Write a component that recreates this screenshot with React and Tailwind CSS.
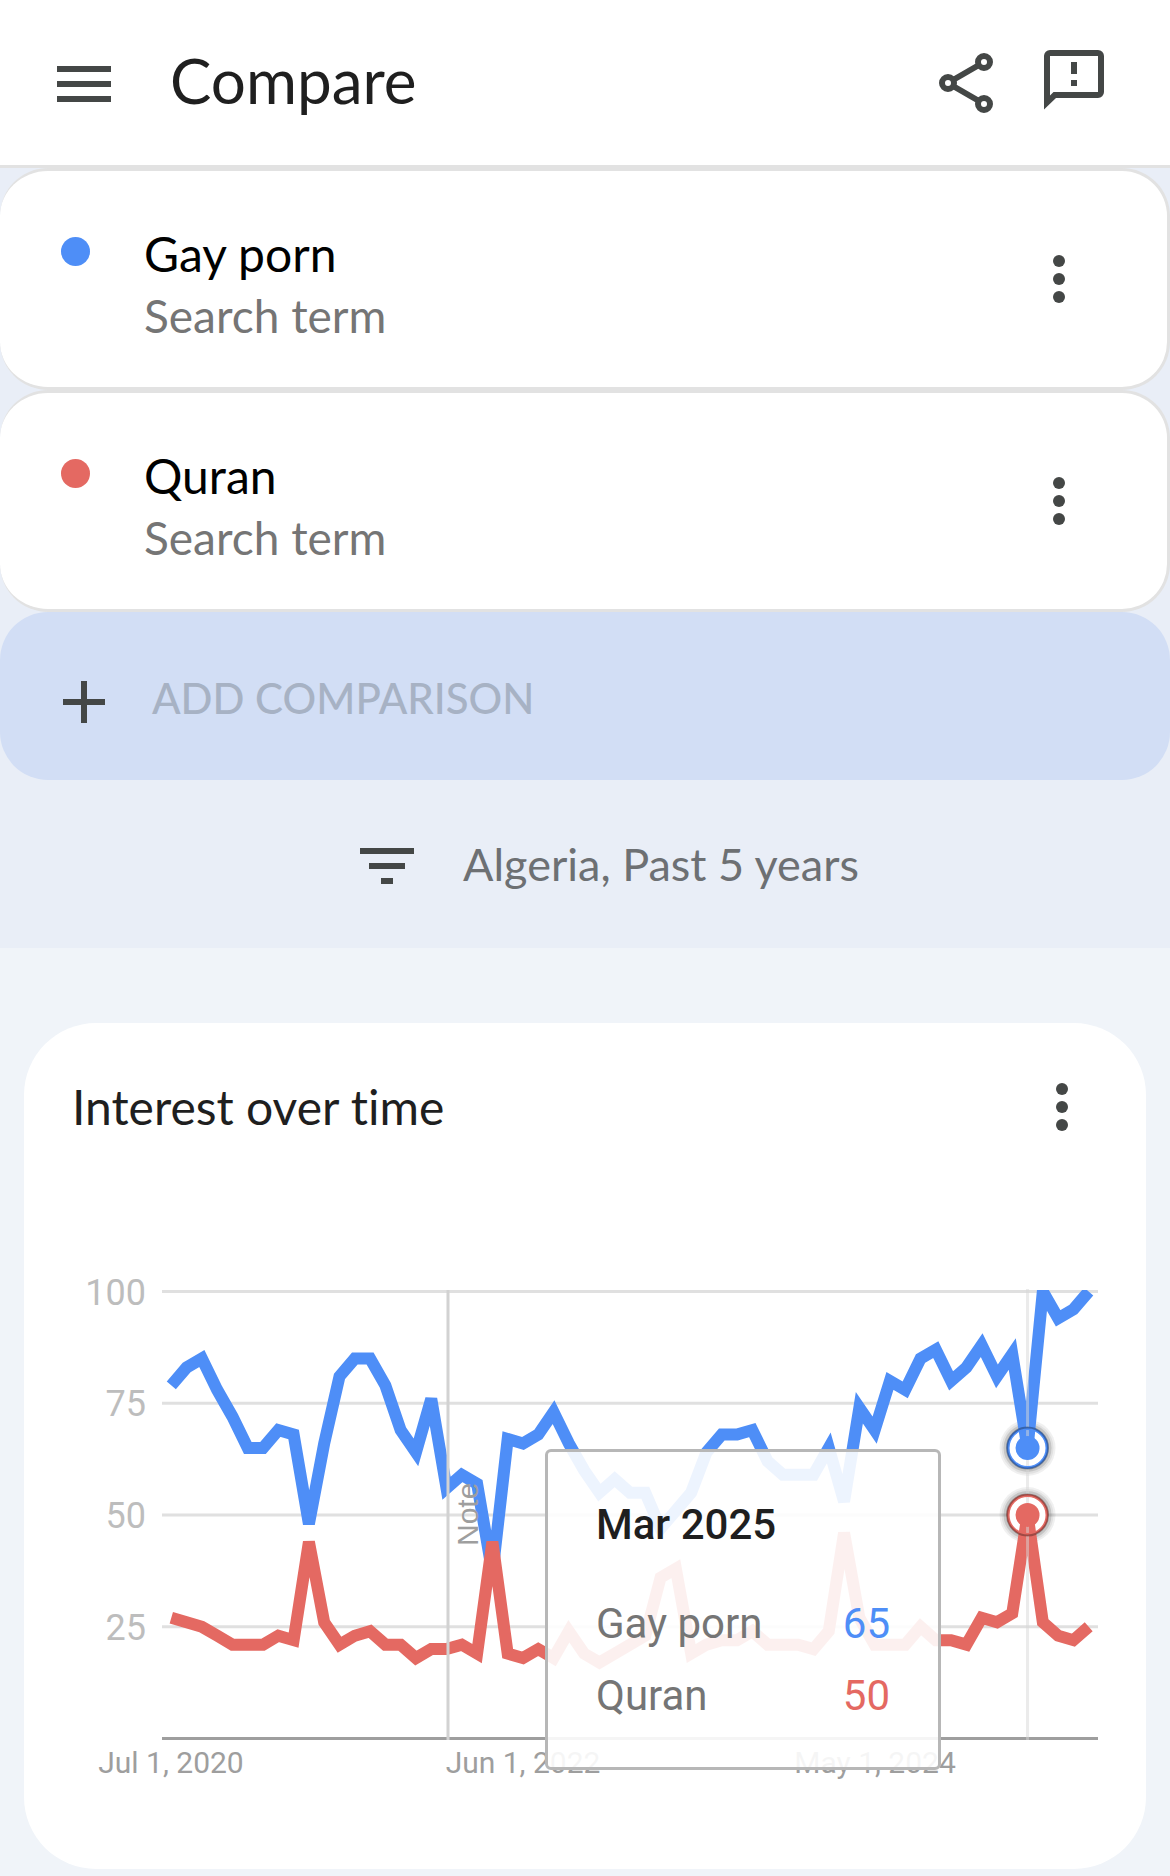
import React from 'react';

const BLUE = '#4e8ef7';
const RED = '#e46962';

const terms = [
  { name: 'Gay porn', dot: 'bg-[#4e8ef7]', value: 65, color: 'text-[#4e8ef7]' },
  { name: 'Quran', dot: 'bg-[#e46962]', value: 50, color: 'text-[#e46962]' },
];

// Monthly values, Jul 2020 - Jul 2025
const blueSeries = [
  79, 83, 85, 78, 72, 65, 65, 69, 68, 48, 66, 81, 85, 85, 79, 69, 64, 76, 56, 59,
  57, 37, 67, 66, 68, 73, 66, 60, 55, 58, 55, 55, 47, 51, 55, 64, 68, 68, 69, 62,
  59, 59, 59, 65, 53, 74, 69, 80, 78, 85, 87, 80, 83, 88, 81, 86, 65, 100, 94, 96, 100,
];
const redSeries = [
  27, 26, 25, 23, 21, 21, 21, 23, 22, 44, 26, 21, 23, 24, 21, 21, 18, 20, 20, 21,
  19, 44, 19, 18, 20, 18, 24, 19, 17, 19, 21, 23, 36, 38, 19, 21, 22, 22, 24, 21,
  21, 21, 20, 24, 46, 27, 21, 21, 21, 25, 22, 22, 21, 27, 26, 28, 50, 26, 23, 22, 25,
];

const ACTIVE = 56;
const xAt = (i) => 147.3 + i * 15.29;
const yAt = (v) => 547.5 - v * 4.47;
const toPoints = (series) => series.map((v, i) => `${xAt(i)},${yAt(v)}`).join(' ');

function MenuIcon() {
  return (
    <svg viewBox="0 0 72 72" className="size-[72px]" fill="#444746">
      <path d="M9 18h54v6H9zM9 33h54v6H9zM9 48h54v6H9z" />
    </svg>
  );
}

function ShareIcon() {
  return (
    <svg viewBox="0 0 72 72" className="size-[72px]" fill="none" stroke="#444746" strokeWidth="6">
      <path d="M23 32 49 17M23 38 49 53" />
      <circle cx="54" cy="14" r="6" />
      <circle cx="18" cy="35" r="6" />
      <circle cx="54" cy="56" r="6" />
    </svg>
  );
}

function FeedbackIcon() {
  return (
    <svg viewBox="0 0 72 72" className="size-[72px]" fill="#444746">
      <path
        fillRule="evenodd"
        d="M12 2h48a6 6 0 0 1 6 6v36a6 6 0 0 1-6 6H18L6 61.500V8a6 6 0 0 1 6-6zM12 8v39.500L15.500 44H60V8z"
      />
      <path d="M33 14h6v12h-6zM33 32h6v6h-6z" />
    </svg>
  );
}

function MoreIcon() {
  return (
    <svg viewBox="0 0 72 72" className="size-[72px]" fill="#444746">
      <circle cx="36" cy="18" r="6" />
      <circle cx="36" cy="36" r="6" />
      <circle cx="36" cy="54" r="6" />
    </svg>
  );
}

function PlusIcon() {
  return (
    <svg viewBox="0 0 72 72" className="size-[72px]" fill="#444746">
      <path d="M15 33h18V15h6v18h18v6H39v18h-6V39H15z" />
    </svg>
  );
}

function FilterIcon() {
  return (
    <svg viewBox="0 0 72 72" className="size-[72px]" fill="#444746">
      <path d="M9 18h54v6H9zM18 33h36v6H18zM30 48h12v6H30z" />
    </svg>
  );
}

function Header() {
  return (
    <header className="flex h-[168px] items-center border-b-3 border-[#e2e2e2] bg-white pt-[3px] pr-[60px] pl-12">
      <button type="button" aria-label="Menu">
        <MenuIcon />
      </button>
      <h1 className="mb-2 ml-[50px] text-[62px] leading-[72px] text-[#1f1f1f]">Compare</h1>
      <div className="ml-auto flex gap-9">
        <button type="button" aria-label="Share">
          <ShareIcon />
        </button>
        <button type="button" aria-label="Send feedback">
          <FeedbackIcon />
        </button>
      </div>
    </header>
  );
}

function TermCard({ term }) {
  return (
    <div className="flex h-[222px] items-center rounded-[48px] border-3 border-l-0 border-[#e2e2e2] bg-white pr-[72px] pl-[61px]">
      <span className={`mb-14 size-[29px] rounded-full ${term.dot}`} />
      <div className="mt-3 ml-[54px]">
        <div className="text-[48px] leading-[62px] text-black">{term.name}</div>
        <div className="text-[46px] leading-[62px] text-[#757575]">Search term</div>
      </div>
      <button type="button" aria-label={`Options for ${term.name}`} className="ml-auto">
        <MoreIcon />
      </button>
    </div>
  );
}

function Marker({ value, color }) {
  return (
    <g>
      <circle cx={xAt(ACTIVE)} cy={yAt(value)} r="19.500" fill="none" stroke={color} strokeWidth="3" />
      <circle cx={xAt(ACTIVE)} cy={yAt(value)} r="20.500" fill="none" stroke="#000" strokeOpacity="0.3" strokeWidth="2" />
      <circle cx={xAt(ACTIVE)} cy={yAt(value)} r="12" fill={color} />
    </g>
  );
}

function MarkerBase({ value }) {
  return (
    <g>
      <circle cx={xAt(ACTIVE)} cy={yAt(value)} r="28" fillOpacity="0.06" />
      <circle cx={xAt(ACTIVE)} cy={yAt(value)} r="26" fillOpacity="0.06" />
      <circle cx={xAt(ACTIVE)} cy={yAt(value)} r="24" fillOpacity="0.12" />
      <circle cx={xAt(ACTIVE)} cy={yAt(value)} r="20" fill="#fff" />
    </g>
  );
}

function TrendChart() {
  return (
    <svg viewBox="0 0 1122 678" className="block w-full font-[Roboto,sans-serif]" role="img" aria-label="Interest over time chart">
      <clipPath id="plot">
        <rect x="138" y="99" width="936" height="450" />
      </clipPath>
      {[100, 75, 50, 25].map((v) => (
        <g key={v}>
          <line x1="138" x2="1074" y1={yAt(v)} y2={yAt(v)} stroke="#e0e0e0" strokeWidth="3" />
          <text x="122" y={yAt(v) + 13} textAnchor="end" fontSize="36" fill="#bdbdbd">{v}</text>
        </g>
      ))}
      <line x1="138" x2="1074" y1="547.500" y2="547.500" stroke="#9e9e9e" strokeWidth="3" />

      <MarkerBase value={65} />
      <MarkerBase value={50} />
      <g clipPath="url(#plot)" fill="none" strokeWidth="12">
        <polyline points={toPoints(blueSeries)} stroke={BLUE} />
        <polyline points={toPoints(redSeries)} stroke={RED} />
      </g>

      <line x1="424" x2="424" y1="99" y2="549" stroke="#d2d2d2" strokeWidth="3" />
      <text transform="translate(454 355) rotate(-90)" fontSize="30" fill="#9e9e9e" className="font-['Liberation_Sans',sans-serif]">
        Note
      </text>
      <line x1={xAt(ACTIVE)} x2={xAt(ACTIVE)} y1="98" y2="549" stroke="#d8d8d8" strokeOpacity="0.5" strokeWidth="3" />
      <Marker value={65} color={BLUE} />
      <Marker value={50} color={RED} />

      <g fontSize="30" fill="#9e9e9e" textAnchor="middle">
        <text x="147" y="582">Jul 1, 2020</text>
        <text x="499" y="582">Jun 1, 2022</text>
        <text x="851" y="582">May 1, 2024</text>
      </g>
    </svg>
  );
}

function ChartTooltip() {
  return (
    <div className="absolute top-[258px] left-[521px] h-[321px] w-[396px] rounded-md border-3 border-[#b7b7b7] bg-white/90 px-12 pt-[43px] font-[Roboto,sans-serif] text-[42px]">
      <div className="leading-[60px] font-medium text-[#1f1f1f]">Mar 2025</div>
      <table className="mt-[33px] w-full">
        <tbody>
          {terms.map((t) => (
            <tr key={t.name} className="leading-[72px]">
              <th scope="row" className="text-left font-normal text-[#757575]">{t.name}</th>
              <td className={`text-right ${t.color}`}>{t.value}</td>
            </tr>
          ))}
        </tbody>
      </table>
    </div>
  );
}

export default function App() {
  return (
    <div className="min-h-screen bg-[#f0f4f9] pb-[7px] font-[Lato,sans-serif] [font-variant-ligatures:none]">
      <Header />

      <section className="bg-[#e9eef7]">
        {terms.map((t) => (
          <TermCard key={t.name} term={t} />
        ))}
        <button type="button" className="flex h-[168px] w-full items-center rounded-[48px] bg-[#d2def5] pt-3 pl-12">
          <PlusIcon />
          <span className="mb-2 ml-8 text-[42px] leading-[60px] font-medium text-[#a7b2c4]">ADD COMPARISON</span>
        </button>
        <button type="button" className="flex h-[168px] w-full items-center justify-center pt-1 pl-10">
          <FilterIcon />
          <span className="mb-1 ml-10 text-[45px] leading-[60px] text-[#6d7073]">Algeria, Past 5 years</span>
        </button>
      </section>

      <main className="mx-6 mt-[75px] rounded-[72px] bg-white">
        <div className="flex h-[168px] items-center justify-between pr-12 pl-12">
          <h2 className="text-[48px] leading-[60px] text-[#1f1f1f]">Interest over time</h2>
          <button type="button" aria-label="Chart options">
            <MoreIcon />
          </button>
        </div>
        <div className="relative">
          <TrendChart />
          <ChartTooltip />
        </div>
      </main>
    </div>
  );
}
